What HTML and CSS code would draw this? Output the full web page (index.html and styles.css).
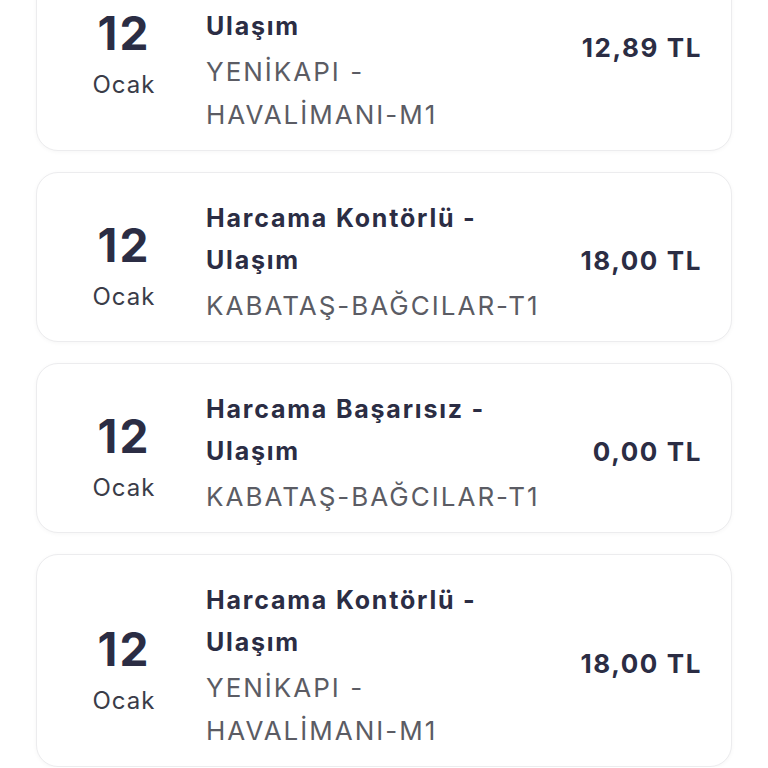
FILE: index.html
```html
<!DOCTYPE html>
<html lang="tr">
<head>
    <meta charset="UTF-8">
    <meta name="viewport" content="width=device-width, initial-scale=1.0">
    <title>Hareketler</title>
    <link rel="stylesheet" href="styles.css">
</head>
<body>

<div class="tx-list">
    <div class="tx-card">
        <div class="tx-date">
            <span class="day">12</span>
            <span class="month">Ocak</span>
        </div>
        <div class="tx-info">
            <div class="tx-title">Harcama Kontörlü - Ulaşım</div>
            <div class="tx-route">YENİKAPI - HAVALİMANI-M1</div>
        </div>
        <div class="tx-amount">12,89 TL</div>
    </div>

    <div class="tx-card">
        <div class="tx-date">
            <span class="day">12</span>
            <span class="month">Ocak</span>
        </div>
        <div class="tx-info">
            <div class="tx-title">Harcama Kontörlü - Ulaşım</div>
            <div class="tx-route">KABATAŞ-BAĞCILAR-T1</div>
        </div>
        <div class="tx-amount">18,00 TL</div>
    </div>

    <div class="tx-card">
        <div class="tx-date">
            <span class="day">12</span>
            <span class="month">Ocak</span>
        </div>
        <div class="tx-info">
            <div class="tx-title">Harcama Başarısız - Ulaşım</div>
            <div class="tx-route">KABATAŞ-BAĞCILAR-T1</div>
        </div>
        <div class="tx-amount">0,00 TL</div>
    </div>

    <div class="tx-card">
        <div class="tx-date">
            <span class="day">12</span>
            <span class="month">Ocak</span>
        </div>
        <div class="tx-info">
            <div class="tx-title">Harcama Kontörlü - Ulaşım</div>
            <div class="tx-route">YENİKAPI - HAVALİMANI-M1</div>
        </div>
        <div class="tx-amount">18,00 TL</div>
    </div>
</div>

</body>
</html>
```

FILE: styles.css
```css
body {
    margin: 0;
    background-color: #ffffff;
    font-family: Inter, "Noto Sans", sans-serif;
    color: #2b2d44;
    overflow: hidden;
}
.tx-list {
    display: flex;
    flex-direction: column;
    gap: 21px;
    padding: 0 36px;
    margin-top: -62px;
}
.tx-card {
    display: flex;
    align-items: center;
    padding: 24px 29px 14px 0;
    border: 1px solid #ececee;
    border-radius: 22px;
    box-shadow: 0 1px 4px rgba(0, 0, 0, 0.04);
    background-color: #fff;
}
.tx-date {
    display: flex;
    flex-direction: column;
    align-items: center;
    width: 100px;
    margin: 7px 32px 0 37px;
    flex-shrink: 0;
}
.day {
    font-size: 46px;
    font-weight: 700;
    line-height: 52px;
    letter-spacing: 2px;
}
.month {
    font-size: 24px;
    color: #3a3c48;
    line-height: 30px;
    margin-top: 11px;
    letter-spacing: 1px;
}
.tx-info {
    width: 350px;
    flex-shrink: 0;
}
.tx-title {
    font-size: 25px;
    font-weight: 700;
    line-height: 42px;
    letter-spacing: 1.8px;
}
.tx-route {
    font-size: 26px;
    color: #5b5c64;
    line-height: 43px;
    margin-top: 3px;
    letter-spacing: 2px;
}
.tx-amount {
    margin: 0 0 4px auto;
    font-size: 26px;
    font-weight: 700;
    white-space: nowrap;
    letter-spacing: 1.6px;
}
```
